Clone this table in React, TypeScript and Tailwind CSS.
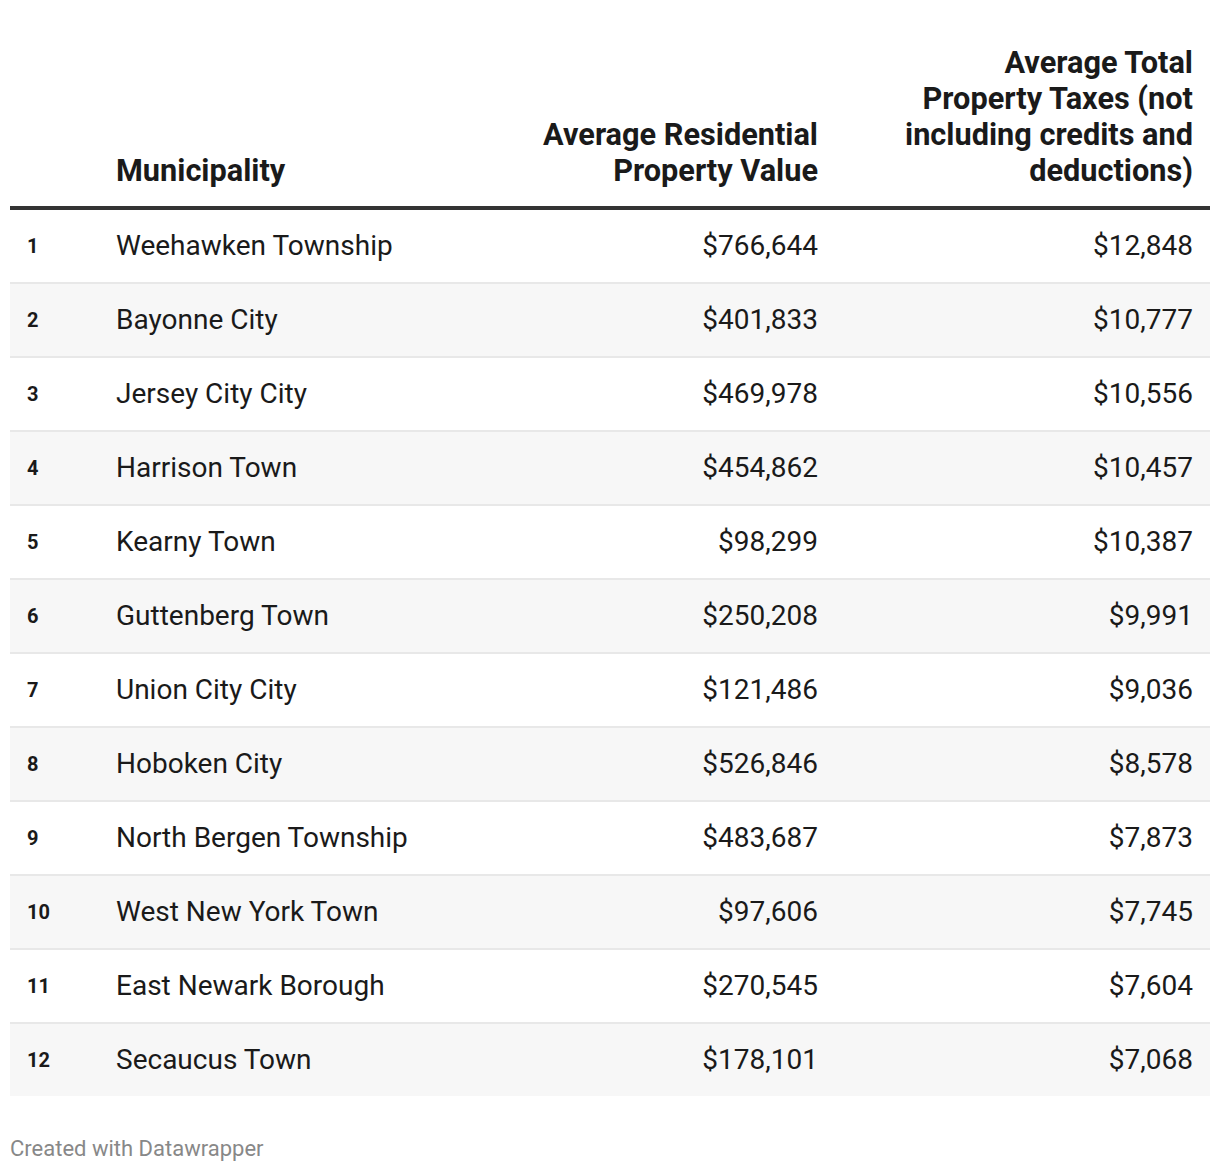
const ROWS = [
  { rank: 1, name: 'Weehawken Township', value: '$766,644', taxes: '$12,848' },
  { rank: 2, name: 'Bayonne City', value: '$401,833', taxes: '$10,777' },
  { rank: 3, name: 'Jersey City City', value: '$469,978', taxes: '$10,556' },
  { rank: 4, name: 'Harrison Town', value: '$454,862', taxes: '$10,457' },
  { rank: 5, name: 'Kearny Town', value: '$98,299', taxes: '$10,387' },
  { rank: 6, name: 'Guttenberg Town', value: '$250,208', taxes: '$9,991' },
  { rank: 7, name: 'Union City City', value: '$121,486', taxes: '$9,036' },
  { rank: 8, name: 'Hoboken City', value: '$526,846', taxes: '$8,578' },
  { rank: 9, name: 'North Bergen Township', value: '$483,687', taxes: '$7,873' },
  { rank: 10, name: 'West New York Town', value: '$97,606', taxes: '$7,745' },
  { rank: 11, name: 'East Newark Borough', value: '$270,545', taxes: '$7,604' },
  { rank: 12, name: 'Secaucus Town', value: '$178,101', taxes: '$7,068' },
]

const GRID = 'grid grid-cols-[106px_402px_300px_392px]'

export default function App() {
  return (
    <div className="w-[1220px] h-[1172px] bg-white px-[10px] pt-[45px] font-['Roboto','Liberation_Sans',sans-serif] text-[#1a1a1a]">
      <div className={`${GRID} items-end border-b-[4px] border-[#333333] pb-[17px] text-[30.7px] leading-[36px] font-bold`}>
        <div />
        <div>Municipality</div>
        <div className="text-right">
          Average Residential
          <br />
          Property Value
        </div>
        <div className="pl-[75px] pr-[17px] text-right">
          Average Total Property Taxes (not including credits and deductions)
        </div>
      </div>
      <div>
        {ROWS.map((row, i) => (
          <div
            key={row.rank}
            className={`${GRID} items-center text-[28px] ${
              i > 0 ? 'h-[74px] border-t-2 border-[#e8e8e8]' : 'h-[72px]'
            } ${i % 2 === 1 ? 'bg-[#f7f7f7]' : 'bg-white'}`}
          >
            <div className="pl-[17px] text-[20px] font-bold">{row.rank}</div>
            <div>{row.name}</div>
            <div className="text-right">{row.value}</div>
            <div className="pr-[17px] text-right">{row.taxes}</div>
          </div>
        ))}
      </div>
      <div className="mt-[36px] text-[22px] text-[#888888]">Created with Datawrapper</div>
    </div>
  )
}
